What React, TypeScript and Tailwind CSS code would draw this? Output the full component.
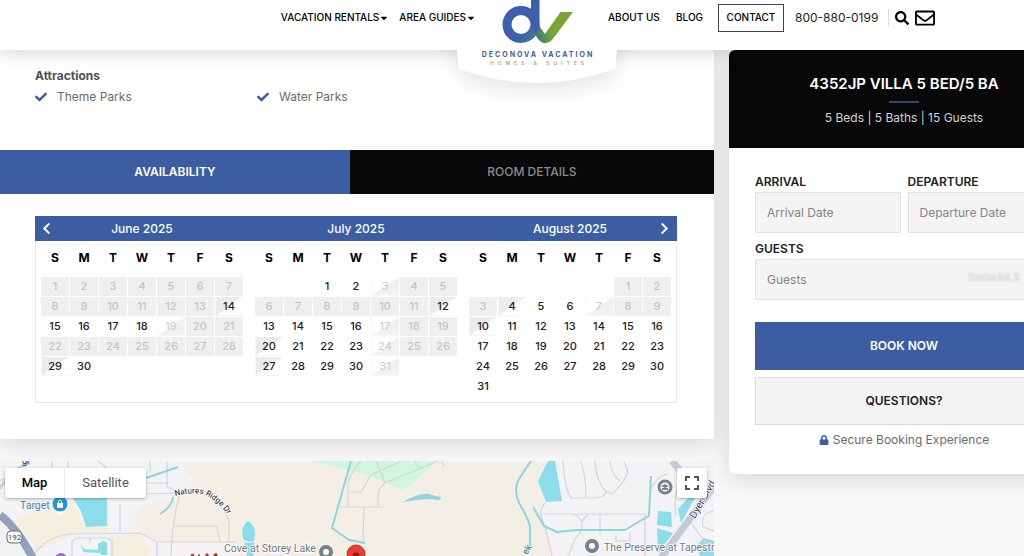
import React from "react";
import { FaCheck, FaChevronLeft, FaChevronRight, FaLock, FaSearch, FaRegEnvelope, FaCaretDown } from "react-icons/fa";

type DayState = "open" | "booked" | "start" | "end";

interface Month {
  name: string;
  offset: number;
  days: number;
  booked: number[];
  start: number[];
  end: number[];
}

const months: Month[] = [
  {
    name: "June 2025",
    offset: 0,
    days: 30,
    booked: [1, 2, 3, 4, 5, 6, 7, 8, 9, 10, 11, 12, 13, 20, 21, 22, 23, 24, 25, 26, 27, 28],
    start: [19],
    end: [14, 29],
  },
  {
    name: "July 2025",
    offset: 2,
    days: 31,
    booked: [4, 5, 6, 7, 8, 9, 10, 11, 18, 19, 25, 26],
    start: [3, 17, 24, 31],
    end: [12, 20, 27],
  },
  {
    name: "August 2025",
    offset: 5,
    days: 31,
    booked: [1, 2, 3, 8, 9],
    start: [7],
    end: [4, 10],
  },
];

const weekdays = ["S", "M", "T", "W", "T", "F", "S"];

const dayStyle: Record<DayState, string> = {
  open: "text-[#222]",
  booked: "bg-[#efefef] text-[#c4c4c4]",
  start: "bg-linear-to-br from-white from-50% to-[#f1f1f1] to-50% text-[#cfcfcf]",
  end: "bg-linear-to-br from-[#ebebeb] from-50% to-white to-50% text-[#222]",
};

function stateOf(month: Month, day: number): DayState {
  if (month.booked.includes(day)) return "booked";
  if (month.start.includes(day)) return "start";
  if (month.end.includes(day)) return "end";
  return "open";
}

function MonthTable({ month }: { month: Month }) {
  const rows = Array.from({ length: 6 }, (_, r) =>
    Array.from({ length: 7 }, (_, c) => {
      const day = r * 7 + c - month.offset + 1;
      return day >= 1 && day <= month.days ? day : null;
    }),
  );
  return (
    <div>
      <h3 className="flex h-[25px] items-center justify-center bg-[#3c5da2] text-[12px] font-medium text-white">
        {month.name}
      </h3>
      <div className="px-[5px]">
        <table aria-label={month.name} className="w-full table-fixed border-collapse text-center text-[11px] font-medium">
          <thead>
            <tr className="h-[35px] text-[12px] text-black">
              {weekdays.map((d, i) => (
                <th key={i} className="p-0 font-bold">
                  {d}
                </th>
              ))}
            </tr>
          </thead>
          <tbody>
            {rows.map((row, r) => (
              <tr key={r} className="h-5">
                {row.map((day, c) => (
                  <td key={c} className={"border border-white p-0 leading-4 " + (day ? dayStyle[stateOf(month, day)] : "")}>
                    {day}
                  </td>
                ))}
              </tr>
            ))}
          </tbody>
        </table>
      </div>
    </div>
  );
}

function Logo() {
  return (
    <a
      href="#home"
      aria-label="Deconova Vacation Homes & Suites"
      className="absolute top-0 left-1/2 flex h-[84px] w-40 -translate-x-1/2 flex-col items-center"
    >
      <span className="absolute inset-0 [clip-path:inset(50px_-30px_-30px_-30px)]">
        <svg viewBox="0 0 160 84" className="h-full w-full overflow-visible" aria-hidden="true">
          <path
            d="M0 20 H160 V50 L158 69 Q80 97 2 69 L0 50 Z"
            fill="#fff"
            className="drop-shadow-[0_8px_10px_rgba(0,0,0,0.10)]"
          />
        </svg>
      </span>
      <svg viewBox="0 0 74 45" className="relative h-[45px] w-[74px]" aria-hidden="true">
        <defs>
          <linearGradient id="logoV" x1="32" y1="30" x2="50" y2="26" gradientUnits="userSpaceOnUse">
            <stop offset="0" stopColor="#3b6a95" />
            <stop offset="0.55" stopColor="#5b9055" />
            <stop offset="1" stopColor="#79a536" />
          </linearGradient>
          <linearGradient id="logoD" x1="14" y1="20" x2="40" y2="36" gradientUnits="userSpaceOnUse">
            <stop offset="0.4" stopColor="#3c60ac" />
            <stop offset="1" stopColor="#4a7c84" />
          </linearGradient>
        </defs>
        <path d="M35 20 L45 34 L60.500 12 H73 L52 40 Q45 47 38 39 L31 28 Z" fill="url(#logoV)" />
        <circle cx="21" cy="24.500" r="14" fill="none" stroke="url(#logoD)" strokeWidth="9" />
        <path d="M31 0 H39.500 V28 L36 33 L31 26 Z" fill="#3c60a8" />
      </svg>
      <span className="relative mt-1 pl-[2px] text-[7px] leading-3 font-bold tracking-[2px] whitespace-nowrap text-[#3c5da2]">
        DECONOVA VACATION
      </span>
      <span className="relative pl-[4px] text-[5px] leading-1 font-semibold tracking-[4px] whitespace-nowrap text-[#9db25c]">
        HOMES &amp; SUITES
      </span>
    </a>
  );
}

function Header() {
  return (
    <header className="relative z-10 h-[50px] bg-white text-[10px] font-medium text-black shadow-[0_0_20px_rgba(0,0,0,0.22)]">
      <div className="-mr-[50px] grid grid-cols-[1fr_122px_1fr]">
        <nav
          aria-label="Browse"
          className="relative z-10 flex h-[35px] items-center justify-end gap-[10px] whitespace-nowrap"
        >
          <a href="#rentals" className="flex items-center">
            VACATION RENTALS
            <FaCaretDown className="size-[10px]" />
          </a>
          <a href="#guides" className="flex items-center">
            AREA GUIDES
            <FaCaretDown className="size-[10px]" />
          </a>
        </nav>
        <div className="relative">
          <Logo />
        </div>
        <nav aria-label="Company" className="relative flex h-[35px] items-center pl-[10px] whitespace-nowrap">
          <a href="#about" className="w-[68px]">
            ABOUT US
          </a>
          <a href="#blog" className="w-[42px]">
            BLOG
          </a>
          <a href="#contact" className="flex h-7 w-[66px] items-center justify-center border border-[#444]">
            CONTACT
          </a>
          <a href="tel:8008800199" className="ml-[11px] w-[93px] text-[12px] font-normal text-[#222]">
            800-880-0199
          </a>
          <button type="button" aria-label="Search" className="flex h-[18px] items-center border-l border-[#ddd] pl-[6px]">
            <FaSearch className="size-[14px]" />
          </button>
          <a href="#mail" aria-label="Email us" className="ml-[6px]">
            <FaRegEnvelope className="size-5" />
          </a>
        </nav>
      </div>
    </header>
  );
}

function Listing() {
  return (
    <section className="relative bg-white shadow-[0_4px_22px_rgba(0,0,0,0.14)]">
      <div className="h-[100px] px-[35px] pt-4">
        <h2 className="text-[12px] leading-5 font-bold text-[#505050]">Attractions</h2>
        <ul className="grid w-[444px] grid-cols-2 text-[12px] leading-[22px] text-[#6b6b6b]">
          <li className="flex items-center gap-[10px]">
            <FaCheck className="size-3 text-[#3c5da2]" />
            Theme Parks
          </li>
          <li className="flex items-center gap-[10px]">
            <FaCheck className="size-3 text-[#3c5da2]" />
            Water Parks
          </li>
        </ul>
      </div>
      <div role="tablist" className="grid h-11 grid-cols-[49%_51%] text-[12px]">
        <button type="button" role="tab" aria-selected="true" className="bg-[#3c5da2] font-semibold text-white">
          AVAILABILITY
        </button>
        <button type="button" role="tab" aria-selected="false" className="bg-[#080808] font-medium text-[#8b8b8b]">
          ROOM DETAILS
        </button>
      </div>
      <div className="pt-[22px] pr-[37px] pb-9 pl-[35px]">
        <div className="relative grid h-[187px] grid-cols-3 border-b border-[#e4e4e4] shadow-[inset_1px_0_0_#e8e8e8,inset_-1px_0_0_#e8e8e8]">
          {months.map((m) => (
            <MonthTable key={m.name} month={m} />
          ))}
          <button type="button" aria-label="Previous months" className="absolute top-[6px] left-[5px] text-white">
            <FaChevronLeft className="size-[13px]" />
          </button>
          <button type="button" aria-label="Next months" className="absolute top-[6px] right-[6px] text-white">
            <FaChevronRight className="size-[13px]" />
          </button>
        </div>
      </div>
    </section>
  );
}

function AreaMap() {
  return (
    <section aria-label="Area map" className="relative mt-[22px] min-h-[95px] flex-1 overflow-hidden bg-[#f3f2f4]">
      <svg
        viewBox="0 0 714 95"
        preserveAspectRatio="xMinYMin slice"
        className="absolute inset-0 h-full w-full font-[Roboto,sans-serif]"
      >
        <path
          d="M178 0 H550 L540 17 L541 28 L545 40 L538 50 L548 75 L550 95 H240 L236 82 H157 L140 72 L133 60 L142 44 L178 38 L195 20 Z"
          fill="#f4efe4"
        />
        <path d="M14 60 Q40 48 74 40 L84 66 H107 L110 72 L75 73 L38 90 Z M110 75 L140 74 L152 90 L148 95 H112 Z" fill="#f5efdf" />
        <path d="M313 0 H438 L415 20 L402 29 L385 21 L360 12 Z" fill="#d0f6dd" />
        <g fill="#8ddcec">
          <path d="M72 36 H107 V65 L86 66 L81 50 Z" />
          <path d="M248 60 Q255 64 255 72 L254 80 Q248 82 243 78 Q240 66 248 60 Z" />
          <path d="M244 81 Q249 83 254 81 L253 95 H247 Z" />
          <path d="M548 0 H555 L562 40 L546 41 L538 20 Z" />
          <path d="M658 50 L671 51 L672 66 L657 64 Z" />
          <path d="M657 67 L673 72 L658 92 Z" />
          <path d="M678 48 L688 37 H695 L681 62 Z" />
          <path d="M697 84 L704 77 L714 80 V95 H700 Z" />
          <path d="M81 83 L84 88 L98 89 V83 L103 80 L107 82 V94 H101 V92 L83 91 Z" />
        </g>
        <g fill="none" stroke="#d5d3dc" strokeWidth="1.200">
          <path d="M35 92 Q50 73 75 73 L140 72 L157 81 H236" />
          <path d="M120 44 V71 M146 33 L180 32 Q172 60 171 95 M173 65 H217 L220 82 M157 81 V95" />
          <path d="M30 0 L0 20 M52 0 V10 M68 0 V10 M98 0 L108 8 M150 0 V12 M167 0 V26 L180 31 M146 22 H168" />
          <path d="M72 80 L76 77 H108 L112 80 V95 M72 80 V95 M90 77 V82" />
          <path d="M205 30 Q226 48 229 60 V82" />
          <path d="M361 0 Q349 13 348 24 V45 M348 31 H361 L371 14 L402 0 M376 0 L385 22 L438 0 M385 22 Q378 27 378 35 V45 M340 46 H384 M364 46 L363 80 M415 0 L419 8 M441 0 L444 5" />
          <path d="M563 0 Q565 32 572 37 L595 37 Q607 36 606 30 L612 33 Q630 16 627 8 L624 0 M580 0 Q586 12 586 37 M595 0 Q596 20 606 31 M610 0 Q612 15 620 20" />
          <path d="M544 53 H645 V95 M600 53 V72 M582 60 L588 53 M574 53 Q590 62 575 78 L568 95 M545 42 Q537 50 545 65 L552 95" />
          <path d="M616 73 V80 H630 V71 M650 32 Q655 15 668 13 M684 12 Q672 30 676 55 M714 50 Q700 52 703 66 L714 70" />
          <path d="M690 60 Q700 75 714 92" />
        </g>
        <g fill="none" stroke="#8fd3e0" strokeWidth="2" strokeLinejoin="round">
          <path d="M146 17 L178 6 M173 36 Q172 46 160 53" />
          <path d="M351 0 L332 67 L349 79 L365 82" />
          <path d="M531 0 Q524 10 519 18 Q513 28 519 42 Q527 55 530 65 V85" />
          <path d="M533 46 L544 65 L557 71 L577 69 L625 69 L640 60 L649 55 L651 15" />
        </g>
        <path d="M403 41 Q418 32 428 33 L441 36 L440 39 L427 38 Q415 39 403 41 Z" fill="#8fd3e0" />
        <path d="M0 54 Q16 66 33 97" fill="none" stroke="#91a2bd" strokeWidth="8" />
        <path d="M0 28 Q10 8 30 2" fill="none" stroke="#c7d3df" strokeWidth="3" />
        <path d="M660 98 L718 20 M672 0 L682 12" fill="none" stroke="#c6cad8" strokeWidth="7" />
        <rect x="7" y="70" width="15" height="12" rx="4" fill="#fff" stroke="#6c6c6c" strokeWidth="1" />
        <text x="14.500" y="79" textAnchor="middle" fontSize="8" fill="#444">
          192
        </text>
        <text x="22" y="3" fontSize="9" fill="#333">
          gr
        </text>
        <text x="20" y="48" fontSize="10.500" fill="#4c86b4">
          Target
        </text>
        <path d="M60 55 L54 48 H66 Z" fill="#fff" />
        <circle cx="60" cy="43" r="8" fill="#1d96dd" stroke="#fff" strokeWidth="1" />
        <path d="M57 42 H63 V47 H57 Z" fill="#fff" />
        <path d="M58.500 42 V40 Q60 38 61.500 40 V42" fill="none" stroke="#fff" />
        <path id="naturesRidge" d="M175 35 Q200 29 209 36 Q220 42 231 58" fill="none" />
        <text fontSize="8" fontWeight="500" fill="#3d4550" stroke="#fff" strokeWidth="1.500" paintOrder="stroke">
          <textPath href="#naturesRidge">Natures Ridge Dr</textPath>
        </text>
        <text x="224" y="91" fontSize="10.500" fill="#707985" stroke="#fff" strokeWidth="1.500" paintOrder="stroke">
          Cove at Storey Lake
        </text>
        <circle cx="326" cy="91" r="5" fill="#fff" stroke="#75848c" strokeWidth="4" />
        <circle cx="356" cy="93" r="9" fill="#ea3e35" stroke="#c52b25" strokeWidth="1" />
        <circle cx="356" cy="95" r="3.500" fill="#8c1a17" />
        <circle cx="61" cy="98" r="6" fill="#a067c8" />
        <path d="M191 95 L194 94 M198 95 H200 M206 95 L208 93 M214 95 L217 93" stroke="#c4302b" strokeWidth="3" />
        <circle cx="665" cy="26" r="6" fill="#fff" stroke="#75848c" strokeWidth="3" />
        <path d="M661 25 L665 23 L669 25 L665 27 Z M662 27 H668 V29 H662 Z" fill="#75848c" />
        <circle cx="592" cy="85" r="5" fill="#fff" stroke="#75848c" strokeWidth="4" />
        <text x="604" y="90" fontSize="10.500" fill="#707985" stroke="#fff" strokeWidth="1.500" paintOrder="stroke">
          The Preserve at Tapestry
        </text>
        <text transform="translate(695 58) rotate(-60)" fontSize="10" fill="#3d4550" stroke="#fff" strokeWidth="1.500" paintOrder="stroke">
          Dyer Blvd
        </text>
        <text transform="translate(527 94) rotate(-60)" fontSize="9" fill="#2b7c8c">
          ek
        </text>
      </svg>
      <div className="absolute top-[7px] left-[5px] flex h-[30px] overflow-hidden rounded-xs bg-white font-[Roboto,sans-serif] text-[13px] shadow-[0_1px_3px_rgba(0,0,0,0.3)]">
        <button type="button" className="w-[60px] border-r border-[#e8e8e8] font-medium text-black">
          Map
        </button>
        <button type="button" className="w-[81px] text-[#565656]">
          Satellite
        </button>
      </div>
      <button
        type="button"
        aria-label="Toggle fullscreen"
        className="absolute top-[7px] right-[7px] flex size-[30px] items-center justify-center rounded-xs bg-white shadow-[0_1px_3px_rgba(0,0,0,0.3)]"
      >
        <svg viewBox="0 0 14 14" className="size-[14px]" fill="none" stroke="#555" strokeWidth="2">
          <path d="M1 5 V1 H5 M9 1 H13 V5 M13 9 V13 H9 M5 13 H1 V9" />
        </svg>
      </button>
    </section>
  );
}

const fieldClass =
  "h-[41px] w-full rounded-none border border-[#e2e2e2] bg-[#f4f4f4] px-[11px] text-[12px] font-normal text-[#333] placeholder:text-[#858585]";

function Booking() {
  return (
    <aside className="-mr-[55px] w-[350px] shrink-0 self-start overflow-hidden rounded-md bg-white text-center shadow-[0_4px_22px_rgba(0,0,0,0.14)]">
      <div className="flex h-[98px] flex-col items-center bg-[#080808] pt-6">
        <h1 className="text-[15px] leading-5 font-semibold whitespace-nowrap text-white">4352JP VILLA 5 BED/5 BA</h1>
        <span className="mt-[7px] h-[2px] w-[30px] bg-[#36436f]" />
        <p className="mt-[5px] text-[12px] leading-5 text-[#d2d2d2]">5 Beds | 5 Baths | 15 Guests</p>
      </div>
      <form className="px-[26px] py-6" onSubmit={(e) => e.preventDefault()}>
        <div className="grid grid-cols-2 gap-x-[7px] gap-y-[6px] text-left text-[12px] leading-5 font-semibold text-[#222]">
          <label className="block">
            ARRIVAL
            <input type="text" placeholder="Arrival Date" className={fieldClass} />
          </label>
          <label className="block">
            DEPARTURE
            <input type="text" placeholder="Departure Date" className={fieldClass} />
          </label>
          <label className="relative col-span-2 block">
            GUESTS
            <input type="text" placeholder="Guests" className={fieldClass} />
            <span
              aria-hidden="true"
              className="absolute top-[30px] left-[213px] text-[10px] leading-4 font-medium text-[#ececec] [text-shadow:0_0_2px_#bbb]"
            >
              StellarMLS
            </span>
          </label>
        </div>
        <button type="submit" className="mt-[22px] h-12 w-full bg-[#3c5da2] text-[12px] font-semibold text-white">
          BOOK NOW
        </button>
        <button
          type="button"
          className="mt-[7px] h-12 w-full border border-[#d9dcd9] bg-[#f4f4f4] text-[12px] font-semibold text-[#222]"
        >
          QUESTIONS?
        </button>
        <p className="mt-[5px] flex items-center justify-center gap-1 text-[12px] leading-5 text-[#6b6b6b]">
          <FaLock className="size-[10px] text-[#3c5da2]" />
          Secure Booking Experience
        </p>
      </form>
    </aside>
  );
}

export default function App() {
  return (
    <div className="flex min-h-screen flex-col overflow-hidden bg-[#f8f8f8] font-[Inter,sans-serif]">
      <Header />
      <main className="flex flex-1 gap-[15px]">
        <div className="flex min-w-0 flex-1 flex-col">
          <Listing />
          <AreaMap />
        </div>
        <Booking />
      </main>
    </div>
  );
}
